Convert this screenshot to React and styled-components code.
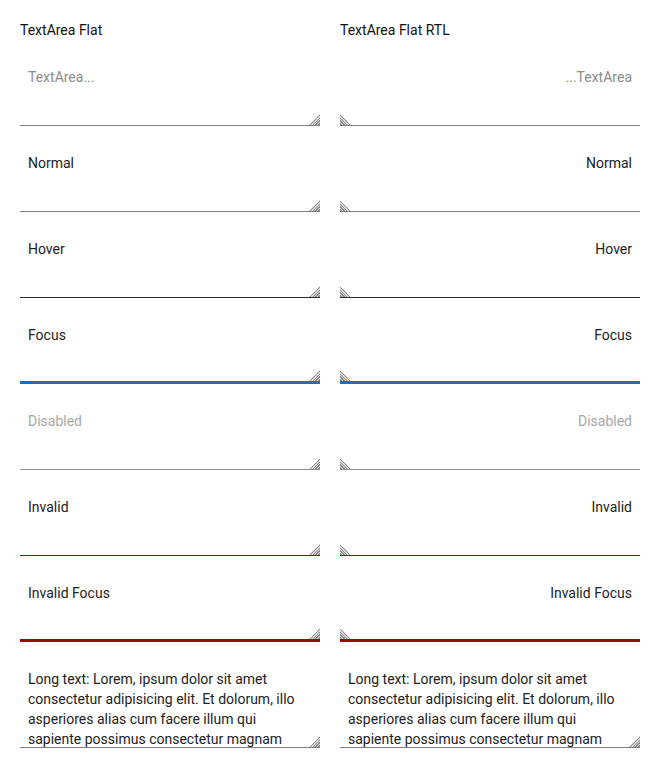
import React from "react";
import styled, { createGlobalStyle, css } from "styled-components";

const Global = createGlobalStyle`
  html, body { margin: 0; padding: 0; background: #fff; }
  body { font-family: Roboto, "Liberation Sans", sans-serif; }
`;

const Page = styled.div`
  display: grid;
  grid-template-columns: 300px 300px;
  column-gap: 20px;
  padding: 20px;
`;

const Column = styled.div`
  display: flex;
  flex-direction: column;
  gap: 19px;
`;

const Title = styled.div`
  font-size: 14px;
  line-height: 20px;
  color: #111;
`;

const lineColors = {
  normal: "#7f7f7f",
  hover: "#2a2a2a",
  focus: "#176fc4",
  disabled: "#8f8f8f",
  invalid: "#9b0a0a",
  invalidFocus: "#9b0a0a",
};

const Area = styled.textarea`
  box-sizing: border-box;
  display: block;
  width: 300px;
  height: ${(p) => (p.$tall ? "87px" : "67px")};
  margin: 0;
  padding: 8px;
  padding-inline-end: 25px;
  border: none;
  border-bottom: ${(p) => (p.$state === "focus" || p.$state === "invalidFocus" ? 3 : 1)}px solid
    ${(p) => lineColors[p.$state] || lineColors.normal};
  border-radius: 0;
  outline: none;
  background: transparent;
  font-family: Roboto, "Liberation Sans", sans-serif;
  font-size: 14px;
  line-height: 20px;
  color: #222;
  overflow: hidden;
  resize: vertical;
  &::placeholder {
    color: #8c8c8c;
    opacity: 1;
  }
  &::-webkit-resizer {
    background-color: transparent;
    background-image:
      linear-gradient(${(p) => (p.dir === "rtl" ? "225deg" : "135deg")}, #fff 50%, transparent 50%),
      repeating-linear-gradient(${(p) => (p.dir === "rtl" ? "225deg" : "135deg")}, #8a8a8a 0 1px, #dcdcdc 1px 2px);
    background-size: 11px 11px;
    background-repeat: no-repeat;
    background-position: ${(p) => (p.dir === "rtl" ? "left 0 bottom 0" : "right 0 bottom 0")};
  }
  ${(p) =>
    p.$state === "disabled" &&
    css`
      color: #a8a8a8;
    `}
`;

const longText =
  "Long text: Lorem, ipsum dolor sit amet consectetur adipisicing elit. Et dolorum, illo asperiores alias cum facere illum qui sapiente possimus consectetur magnam nesciunt voluptatem, quae fuga accusamus.";

const rows = [
  { state: "normal", placeholder: "TextArea..." },
  { state: "normal", value: "Normal" },
  { state: "hover", value: "Hover" },
  { state: "focus", value: "Focus" },
  { state: "disabled", value: "Disabled", disabled: true },
  { state: "invalid", value: "Invalid" },
  { state: "invalidFocus", value: "Invalid Focus" },
];

function Stack({ title, rtl }) {
  return (
    <Column>
      <Title>{title}</Title>
      {rows.map((r, i) => (
        <Area
          key={i}
          dir={rtl ? "rtl" : "ltr"}
          $state={r.state}
          placeholder={r.placeholder}
          defaultValue={r.value}
          disabled={r.disabled}
        />
      ))}
      <Area dir="ltr" $state="normal" $tall defaultValue={longText} />
    </Column>
  );
}

export default function App() {
  return (
    <>
      <Global />
      <Page>
        <Stack title="TextArea Flat" />
        <Stack title="TextArea Flat RTL" rtl />
      </Page>
    </>
  );
}
